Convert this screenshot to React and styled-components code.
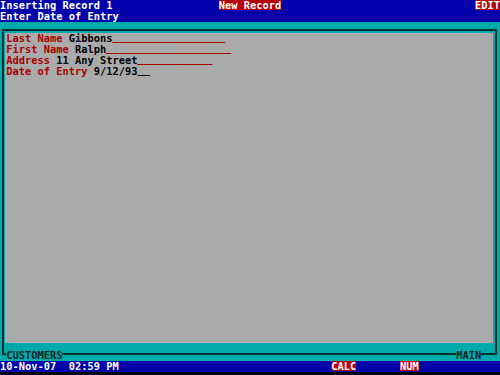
import React from 'react'
import styled, { createGlobalStyle } from 'styled-components'

const COL = 6.25
const ROW = 11

const COLOR = {
  BLUE: '#0000aa',
  CYAN: '#00aaaa',
  GRAY: '#aaaaaa',
  RED: '#a80000',
  BADGE: '#b40008',
  WHITE: '#ffffff',
  LINE: '#062f2f',
  INK: '#000000',
}

const FIELDS = [
  { label: 'Last Name', value: 'Gibbons', size: 25 },
  { label: 'First Name', value: 'Ralph', size: 25 },
  { label: 'Address', value: '11 Any Street', size: 25 },
  { label: 'Date of Entry', value: '9/12/93', size: 9, active: true },
]

const GlobalStyle = createGlobalStyle`
  html, body {
    margin: 0;
    padding: 0;
    background: #000;
  }
  body {
    font-family: "DejaVu Sans Mono", "Liberation Mono", monospace;
    font-size: 10.38px;
    font-weight: bold;
    line-height: ${ROW}px;
  }
`

function App() {
  return (
    <>
      <GlobalStyle />
      <Screen>
        <TopBar>
          <Row>
            <Seg $w={35}>Inserting Record 1</Seg>
            <Badge $w={10}>New Record</Badge>
            <Spacer />
            <Badge $w={4}>EDIT</Badge>
          </Row>
          <Row>
            <Seg>Enter Date of Entry</Seg>
          </Row>
        </TopBar>

        <Workspace>
          <Frame>
            <Form>
              {FIELDS.map((field) => (
                <Row key={field.label}>
                  <Label $w={field.label.length + 1}>{field.label}</Label>
                  <Value $w={field.value.length}>{field.value}</Value>
                  <Blank $active={field.active}>
                    {'_'.repeat(field.size - field.value.length)}
                  </Blank>
                </Row>
              ))}
            </Form>
          </Frame>
          <FrameFooter>
            <FrameTitle>CUSTOMERS</FrameTitle>
            <Spacer />
            <FrameTitle>MAIN</FrameTitle>
          </FrameFooter>
        </Workspace>

        <StatusBar>
          <Seg $w={11}>10-Nov-07</Seg>
          <Seg $w={42}>02:59 PM</Seg>
          <Badge $w={4}>CALC</Badge>
          <Seg $w={7} />
          <Badge $w={3}>NUM</Badge>
        </StatusBar>
      </Screen>
    </>
  )
}

const Screen = styled.div`
  width: 500px;
  height: 375px;
  padding-bottom: 3px;
  box-sizing: border-box;
  display: flex;
  flex-direction: column;
  background: #000;
  overflow: hidden;
`

const TopBar = styled.div`
  height: 22px;
  background: ${COLOR.BLUE};
  color: ${COLOR.WHITE};
  display: flex;
  flex-direction: column;
`

const Row = styled.div`
  height: ${ROW}px;
  display: flex;
  align-items: stretch;
  white-space: pre;
`

const Seg = styled.span`
  display: inline-block;
  width: ${({ $w }) => ($w ? `${$w * COL}px` : 'auto')};
  flex: none;
  overflow: visible;
`

const Badge = styled(Seg)`
  height: 10px;
  background: ${COLOR.BADGE};
  color: ${COLOR.WHITE};
`

const Spacer = styled.div`
  flex: 1;
`

const Workspace = styled.div`
  flex: 1;
  background: ${COLOR.CYAN};
  padding: 7px 3px 0 2px;
  display: flex;
  flex-direction: column;
`

const Frame = styled.div`
  flex: 1;
  border: 2px solid ${COLOR.LINE};
  padding: 2px 2px 10px 1px;
  display: flex;
  flex-direction: column;
`

const Form = styled.div`
  flex: 1;
  background: ${COLOR.GRAY};
  padding-left: 1.25px;
`

const Label = styled(Seg)`
  color: ${COLOR.RED};
`

const Value = styled(Seg)`
  color: ${COLOR.INK};
`

const Blank = styled.span`
  margin-top: -2px;
  color: ${({ $active }) => ($active ? COLOR.INK : COLOR.RED)};
`

const FrameFooter = styled.div`
  height: ${ROW}px;
  margin-top: -5px;
  padding: 0 15.75px 0 4.25px;
  display: flex;
  white-space: pre;
`

const FrameTitle = styled.span`
  background: ${COLOR.CYAN};
  color: #031f1f;
`

const StatusBar = styled.div`
  height: ${ROW}px;
  background: ${COLOR.BLUE};
  color: ${COLOR.WHITE};
  display: flex;
  white-space: pre;
`

export default App
